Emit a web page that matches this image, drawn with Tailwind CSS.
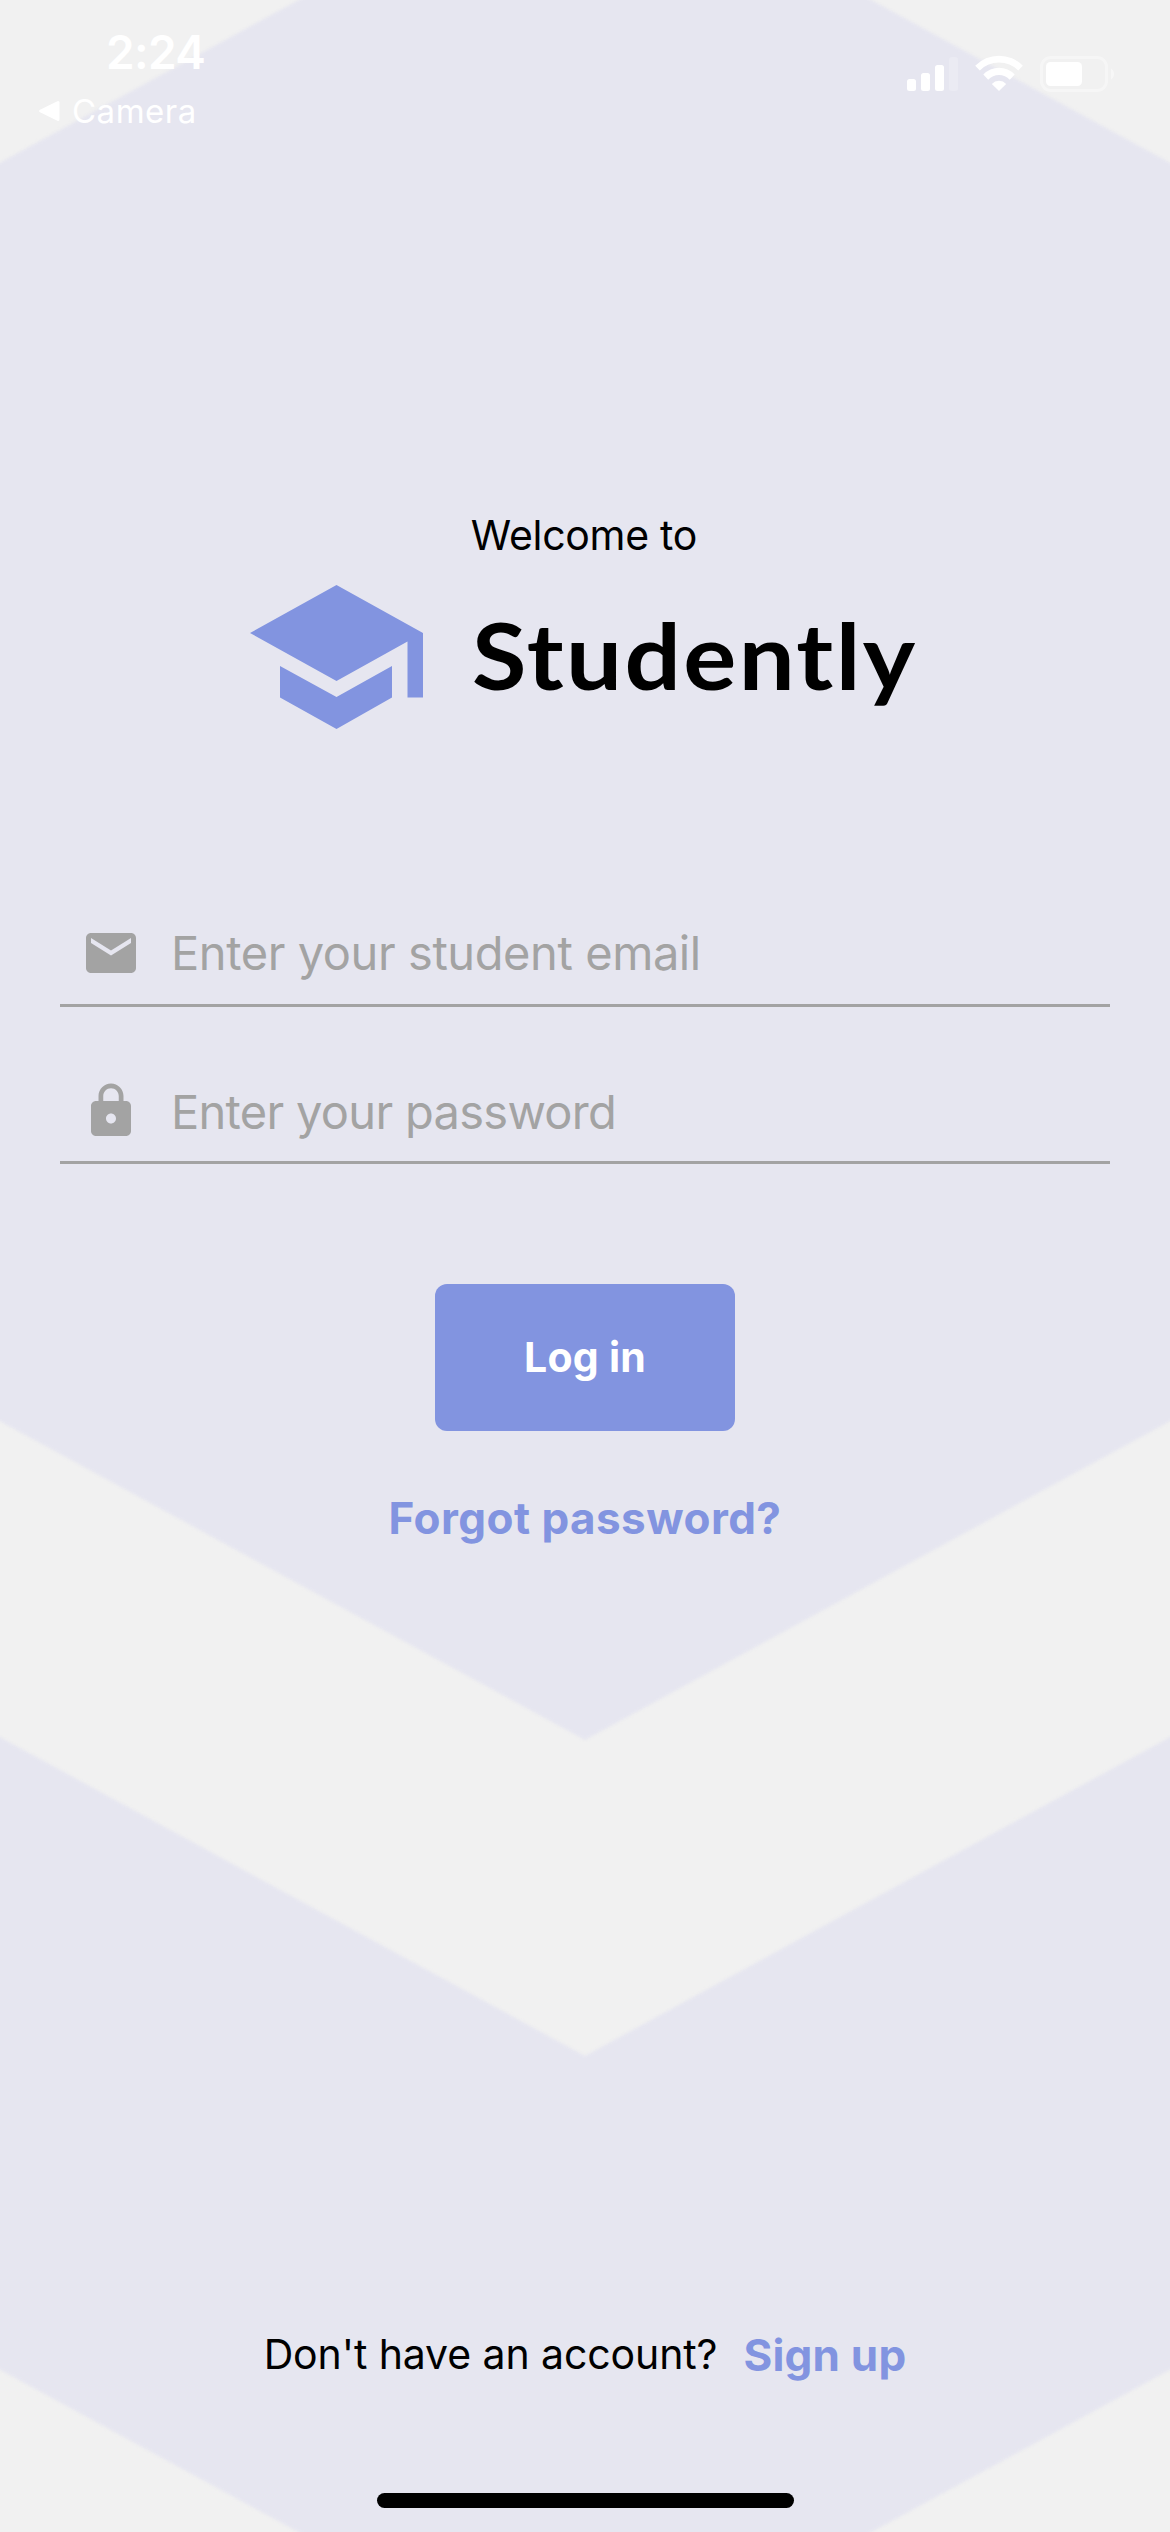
<!DOCTYPE html>
<html lang="en">
<head>
<meta charset="utf-8">
<title>Studently</title>
<script src="https://cdn.jsdelivr.net/npm/@tailwindcss/browser@4"></script>
</head>
<body class="bg-[#f1f1f1]">
<div class="relative flex flex-col w-[1170px] h-[2532px] overflow-hidden font-['Inter',sans-serif] text-black">

  <!-- Chevron backdrop -->
  <svg class="absolute inset-0" width="1170" height="2532" viewBox="0 0 1170 2532" fill="#e6e6f0" aria-hidden="true">
    <filter id="soft" x="-5%" y="-5%" width="110%" height="110%" color-interpolation-filters="sRGB"><feGaussianBlur stdDeviation="1.5"/></filter>
    <g filter="url(#soft)">
      <path d="M-60 195.5 585 -156 1230 195.5V1388.5L585 1740-60 1388.5Z"/>
      <path d="M-60 1704.5 585 2056 1230 1704.5V2337L585 2688-60 2337Z"/>
    </g>
  </svg>

  <header class="relative flex justify-between h-[132px] pl-[39px] pr-[55px] pt-6 text-white">
    <div>
      <div class="pl-[67px] text-[46px] leading-[56px] font-semibold tracking-[-0.7px]">2:24</div>
      <div class="mt-[11px] flex items-center">
        <svg class="mr-[12px]" width="21" height="22" viewBox="0 0 21 22" fill="#fff" stroke="#fff" stroke-width="3" stroke-linejoin="round"><path d="M1.7 11 19 2.5V19.5Z"/></svg>
        <span class="text-[33px] leading-10 tracking-[0.5px]">Camera</span>
      </div>
    </div>
    <div class="flex items-start pt-[31px]">
      <svg class="mt-px" width="51" height="36" viewBox="0 0 51 36" fill="#fff">
        <rect y="23" width="9" height="12" rx="2.5"/><rect x="14" y="17" width="9" height="18" rx="2.5"/><rect x="28" y="9" width="9" height="26" rx="2.5"/><rect x="42" y="1" width="9" height="34" rx="2.5" opacity=".2"/>
      </svg>
      <svg class="ml-[17px]" width="48" height="37" viewBox="0 0 48 37" fill="#fff">
        <path d="M.2 10.8A33 33 0 0 1 47.8 10.8L43.2 15.5A27 27 0 0 0 4.8 15.5Z"/>
        <path d="M8.3 19.6A21.5 21.5 0 0 1 39.7 19.6L34.8 24.8A14.8 14.8 0 0 0 13.2 24.8Z"/>
        <path d="M16.8 28.9A10 10 0 0 1 31.2 28.9L24 36Z"/>
      </svg>
      <svg class="ml-[17px] mt-px" width="75" height="36" viewBox="0 0 75 36" fill="#fff">
        <rect x="1.5" y="1.5" width="65" height="33" rx="9.5" fill="none" stroke="#fff" stroke-width="3" opacity=".4"/>
        <rect x="6" y="6" width="36" height="24" rx="4.5"/>
        <path d="M71 12.5A6.5 6.5 0 0 1 71 23.5Z" opacity=".45"/>
      </svg>
    </div>
  </header>

  <main class="relative flex flex-col items-center px-[60px] pt-[378px]">
    <p class="-ml-[2px] text-[41px] leading-[50px] tracking-[-0.28px]">Welcome to</p>

    <h1 class="mt-[25px] flex h-36 w-full items-start pl-[190px]">
      <svg class="shrink-0" width="173" height="144" viewBox="0 0 173 144" fill="#8294e0" aria-hidden="true">
        <path d="M86.5 0 173 48V112.5H157.5V56.5L86.5 96 0 48Z"/>
        <path d="M30 81 86.5 112 142 81V112.5L86.5 144 30 112.5Z"/>
      </svg>
      <span class="ml-[49px] mt-[15px] origin-left scale-x-[1.08] text-[92px] leading-[110px] font-bold tracking-[2.2px] font-['Lato',sans-serif]">Studently</span>
    </h1>

    <div class="mt-[194px] flex h-[84px] w-full items-start gap-[30px] border-b-3 border-[#a3a3a3] pl-[21px] text-[47px] leading-[60px] text-[#a3a3a3]">
      <svg class="shrink-0" width="60" height="60" viewBox="0 0 24 24" fill="currentColor"><path d="M20 4H4c-1.1 0-1.99.9-1.99 2L2 18c0 1.1.9 2 2 2h16c1.1 0 2-.9 2-2V6c0-1.1-.9-2-2-2zm0 4-8 5-8-5V6l8 5 8-5v2z"/></svg>
      <span class="tracking-[-0.42px]">Enter your student email</span>
    </div>

    <div class="mt-[73px] flex h-[84px] w-full items-start gap-[30px] border-b-3 border-[#a3a3a3] pl-[21px] text-[47px] leading-[60px] text-[#a3a3a3]">
      <svg class="mt-px shrink-0" width="60" height="60" viewBox="0 0 24 24" fill="currentColor"><path d="M18 8h-1V6c0-2.76-2.24-5-5-5S7 3.24 7 6v2H6c-1.1 0-2 .9-2 2v10c0 1.1.9 2 2 2h12c1.1 0 2-.9 2-2V10c0-1.1-.9-2-2-2zm-6 9c-1.1 0-2-.9-2-2s.9-2 2-2 2 .9 2 2-.9 2-2 2zm3.1-9H8.9V6c0-1.71 1.39-3.1 3.1-3.1s3.1 1.39 3.1 3.1v2z"/></svg>
      <span class="mt-[2px] tracking-[-0.7px]">Enter your password</span>
    </div>

    <button class="mt-[120px] h-[147px] w-[300px] rounded-xl bg-[#8294e0] text-[41px] font-bold tracking-[0.25px] text-white">Log in</button>
    <a class="mt-[60px] text-[44px] leading-[54px] font-bold tracking-[0.45px] text-[#8294e0]">Forgot password?</a>
  </main>

  <footer class="relative mt-auto flex flex-col items-center pb-6">
    <p class="flex h-[54px] items-start gap-[26px]">
      <span class="mt-px text-[41px] leading-[50px] tracking-[-0.1px]">Don't have an account?</span>
      <a class="text-[44px] leading-[54px] font-bold tracking-[0.2px] text-[#8294e0]">Sign up</a>
    </p>
    <div class="mt-[111px] h-[15px] w-[417px] rounded-full bg-black"></div>
  </footer>
</div>
</body>
</html>
